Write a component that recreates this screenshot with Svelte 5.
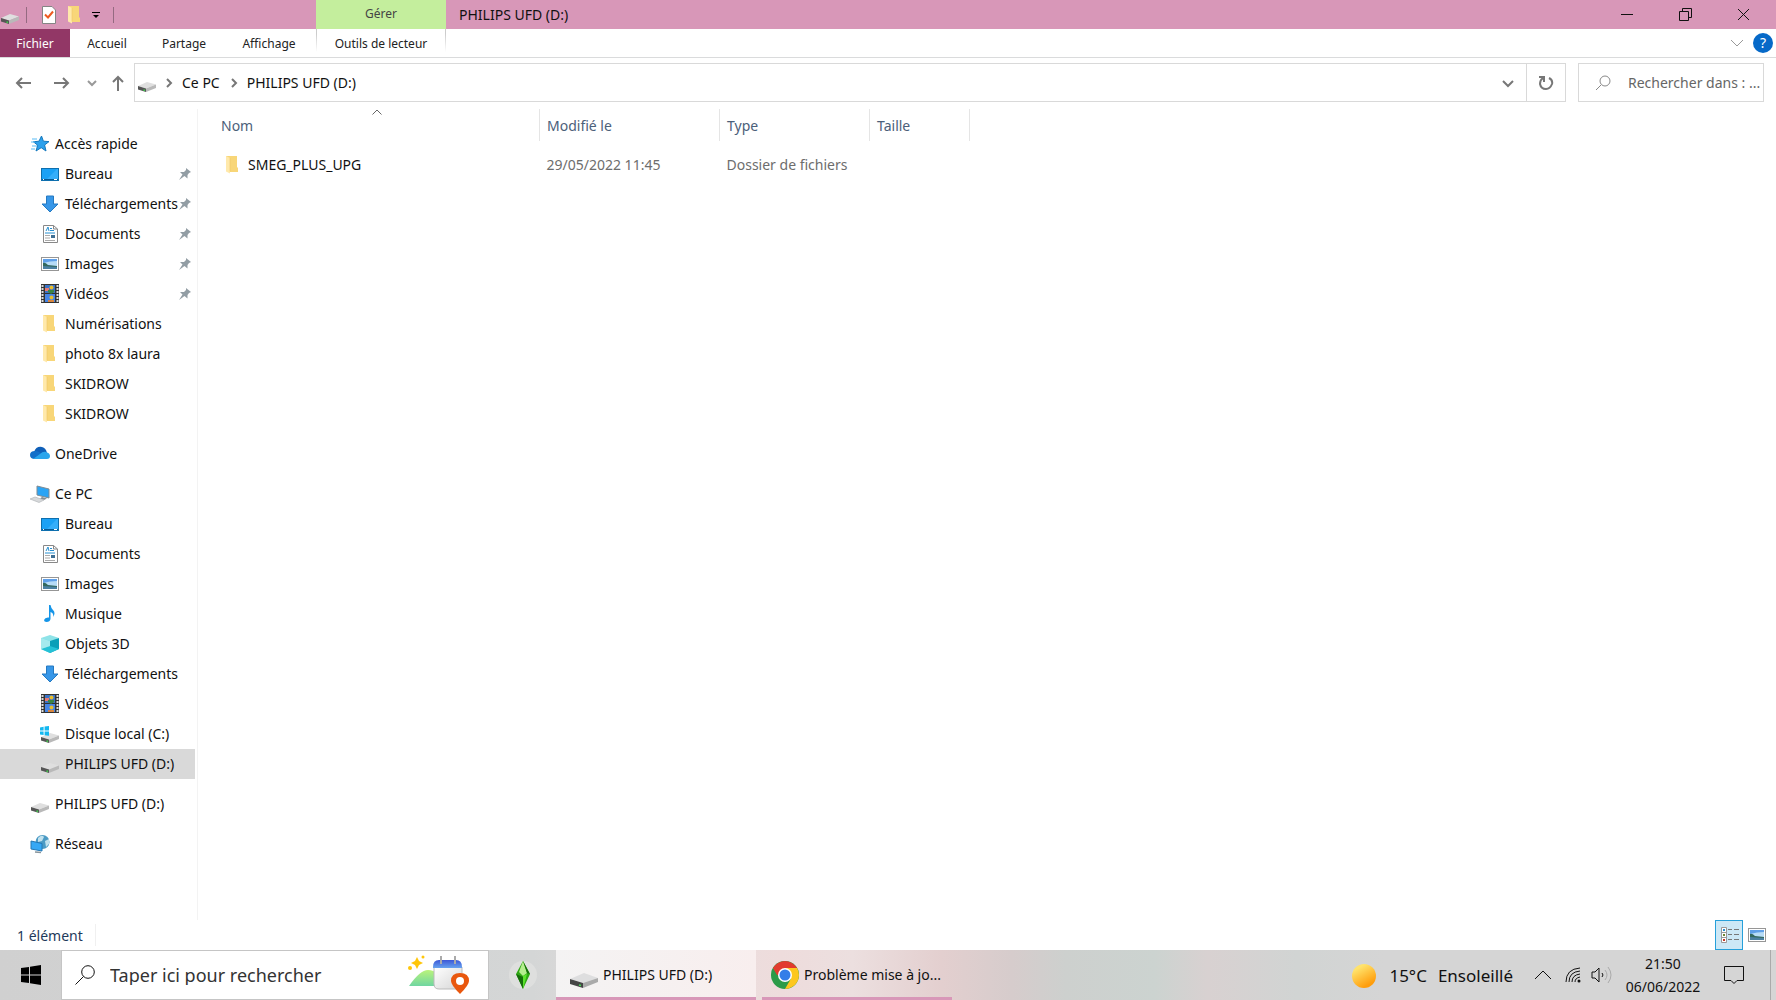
<script>
  const quickAccess = [
    { icon: 'desktop', label: 'Bureau', pinned: true },
    { icon: 'download', label: 'Téléchargements', pinned: true },
    { icon: 'document', label: 'Documents', pinned: true },
    { icon: 'picture', label: 'Images', pinned: true },
    { icon: 'video', label: 'Vidéos', pinned: true },
    { icon: 'folder', label: 'Numérisations' },
    { icon: 'folder', label: 'photo 8x laura' },
    { icon: 'folder', label: 'SKIDROW' },
    { icon: 'folder', label: 'SKIDROW' }
  ];

  const thisPc = [
    { icon: 'desktop', label: 'Bureau' },
    { icon: 'document', label: 'Documents' },
    { icon: 'picture', label: 'Images' },
    { icon: 'music', label: 'Musique' },
    { icon: 'cube', label: 'Objets 3D' },
    { icon: 'download', label: 'Téléchargements' },
    { icon: 'video', label: 'Vidéos' },
    { icon: 'system', label: 'Disque local (C:)' },
    { icon: 'drive', label: 'PHILIPS UFD (D:)', id: 'usb' }
  ];

  const groups = [
    { icon: 'star', label: 'Accès rapide', items: quickAccess },
    { icon: 'cloud', label: 'OneDrive', items: [] },
    { icon: 'pc', label: 'Ce PC', items: thisPc },
    { icon: 'drive', label: 'PHILIPS UFD (D:)', items: [] },
    { icon: 'network', label: 'Réseau', items: [] }
  ];

  const files = [
    { name: 'SMEG_PLUS_UPG', date: '29/05/2022 11:45', type: 'Dossier de fichiers', size: '' }
  ];

  let selected = $state('usb');
</script>

{#snippet icon(name)}
  <svg class="icon" viewBox="0 0 20 20" aria-hidden="true">
    {#if name === 'drive' || name === 'system'}
      <path d="M1 13 10 9 19 11.500 9 15.500Z" fill="#dfdfdf" />
      <path d="M1 13 9 15.500V19L1 16.500Z" fill="#555" />
      <path d="M9 15.500 19 11.500V15L9 19Z" fill="#b9b9b9" />
      <path d="M6.500 17 8 17.500" stroke="#3fcf4a" stroke-width="1.4" />
      {#if name === 'system'}
        <path d="M0 3.400 3.600 2.800V6.400H0ZM4.600 2.600 9 2V6.400H4.600ZM0 7.400H3.600V11L0 10.400ZM4.600 7.400H9V11.800L4.600 11.200Z" fill="#14b8f0" />
      {/if}
    {:else if name === 'folder'}
      <path d="M3 1H14V12L15 13V17H6Z" fill="#f8d678" />
      <path d="M3 1 7 3V18.500L3 16.500Z" fill="#ffe9ab" />
      <path d="M7 3V16.500" stroke="#eec765" stroke-width="0.6" />
    {:else if name === 'star'}
      <path d="M11.500 2 13.400 7.200 19 7.600 14.600 11 16 17 11.200 13.700 6 17 7.700 11.200 3.400 7.800 9 7.200Z" fill="#2ba0ec" stroke="#1478bd" />
      <path d="M2 5H7M1 8H5M2 12H7M1 15H5" stroke="#59bbf5" />
    {:else if name === 'desktop'}
      <rect x="1.500" y="4.500" width="17" height="12" fill="#1ba1f5" stroke="#0e6fae" />
      <path d="M7 15 17 5H18V15Z" fill="#35aefa" />
      <path d="M2 15.500H18" stroke="#075a94" />
      <path d="M3 15.500H4M14 15.500H17" stroke="#fff" />
    {:else if name === 'download'}
      <path d="M6.500 2H13.500V10H18L10 18 2 10H6.500Z" fill="#3797e8" stroke="#2479c1" />
    {:else if name === 'document'}
      <path d="M3.500 1.500H13.500L17.500 5V18.500H3.500Z" fill="#fff" stroke="#888" />
      <path d="M13.500 1.500V5H17.500" fill="none" stroke="#888" />
      <path d="M6 7 8 3 9 7M10 4.500H12M10 6.500H14M5 9H15" stroke="#278fd0" fill="none" />
      <path d="M5 11.500H10M5 14H10M5 16.500H15" stroke="#aaa" />
      <rect x="11" y="11" width="4" height="3" fill="#3f7095" />
    {:else if name === 'picture'}
      <rect x="1.500" y="3.500" width="17" height="13" fill="#fff" stroke="#969696" />
      <rect x="3" y="5" width="14" height="10" fill="#b7dcf7" />
      <path d="M3 5H17V7Q10 7 3 9Z" fill="#5f9fe8" />
      <path d="M3 9Q5 8 8 11L17 12V13H3Z" fill="#33685d" />
      <path d="M3 12 17 13V15H3Z" fill="#4b80a2" />
    {:else if name === 'video'}
      <rect x="1" y="0" width="18" height="19" fill="#333" />
      <path d="M2.500 1V18M17.500 1V18" stroke="#ddd" stroke-width="2" stroke-dasharray="2 1" />
      <rect x="5" y="1" width="10" height="8" fill="#3b74c8" />
      <rect x="5" y="10" width="10" height="8" fill="#4585e5" />
      <path d="M5 4H9V7H5Z" fill="#e97972" />
      <circle cx="11.500" cy="3.500" r="2" fill="#e7be30" />
      <path d="M8 6H14V8L11 10 8 8Z" fill="#3b8544" />
      <circle cx="11.500" cy="13.500" r="2" fill="#e7be30" />
      <path d="M8 16H14V18H8Z" fill="#d9863f" />
    {:else if name === 'cloud'}
      <path d="M4 8Q6 2 12 3Q16 4 17 9L12 12Z" fill="#0f5fb8" />
      <path d="M5 15Q0 15 0 11Q0 7 5 7Q7 7 9 8L15 12L12 15Z" fill="#126fc9" />
      <path d="M3 15 10 10Q13 7 16 8Q20 9 20 12Q20 15 17 15H5Z" fill="#2aa5ec" />
    {:else if name === 'pc'}
      <path d="M7 2 19 5V14L7 11Z" fill="#2ba4f5" stroke="#7f8b93" />
      <path d="M12 13 17 14.500 14 16 10 14.500Z" fill="#858d92" />
      <path d="M0 15 5 13 14 16 9 18.500Z" fill="#d7d9db" stroke="#a9aeb2" stroke-width="0.6" />
    {:else if name === 'music'}
      <path d="M9 1H10.500Q11 4 13 6Q16 9 13 13Q14 9 10.500 8V15Q10 18 6.500 18Q4 18 4 16Q5 13 9 13.500V1Z" fill="#1595e8" />
    {:else if name === 'cube'}
      <path d="M1 4 10 1 19 4 10 8Z" fill="#8fe3e8" />
      <path d="M1 4 10 7V19L1 15Z" fill="#62d3dc" />
      <path d="M10 7 19 4V15L10 19Z" fill="#0b9fb8" />
      <path d="M1 15 10 12 19 15 10 19Z" fill="#25c1d6" />
      <path d="M1 4 10 7V12L1 15Z" fill="#a5eaee" />
    {:else if name === 'network'}
      <circle cx="12.500" cy="8" r="7" fill="#4b9ac4" />
      <path d="M8 4Q12 0 14 3L12 7 8 8ZM15 7 19 5V10L16 13Z" fill="#c1e1ed" />
      <path d="M1 7 12 9.500V17L1 15Z" fill="#35a8f5" stroke="#2478b4" />
      <path d="M5 18 11 18.500" stroke="#87949c" stroke-width="1.500" />
    {/if}
  </svg>
{/snippet}

{#snippet chevron()}
  <svg class="chevron" viewBox="0 0 8 12" aria-hidden="true"><path d="M2 2 6 6 2 10" /></svg>
{/snippet}

<div class="desktop">
  <header class="titlebar">
    <div class="quick-tools">
      {@render icon('drive')}
      <i class="tool-line"></i>
      <button aria-label="Propriétés">
        <svg class="icon" viewBox="0 0 20 20">
          <path d="M4.500 1.500H14L17.500 5V18.500H4.500Z" fill="#fff" stroke="#858585" />
          <path d="M7 9.500 10 12.500 15 6.500" fill="none" stroke="#ee5a20" stroke-width="2" />
        </svg>
      </button>
      <button aria-label="Nouveau dossier">{@render icon('folder')}</button>
      <button aria-label="Personnaliser">
        <svg class="small-icon" viewBox="0 0 8 8"><path d="M0 1.500H8" stroke="#000" /><path d="M1 4H7L4 7Z" /></svg>
      </button>
      <i class="tool-line"></i>
    </div>
    <span class="context">Gérer</span>
    <h1>PHILIPS UFD (D:)</h1>
    <div class="window-controls">
      <button aria-label="Réduire"><svg viewBox="0 0 13 13"><path d="M0 6.500H12" /></svg></button>
      <button aria-label="Restaurer"><svg viewBox="0 0 13 13"><path d="M0.500 3.500H9.500V12.500H0.500ZM3.500 3V0.500H12.500V9.500H10" /></svg></button>
      <button aria-label="Fermer"><svg viewBox="0 0 13 13"><path d="M1 1 12 12M12 1 1 12" /></svg></button>
    </div>
  </header>

  <nav class="ribbon" aria-label="Ruban">
    <button class="file-tab">Fichier</button>
    <button class="home-tab">Accueil</button>
    <button class="share-tab">Partage</button>
    <button class="view-tab">Affichage</button>
    <button class="drive-tab">Outils de lecteur</button>
    <div class="ribbon-end">
      <button aria-label="Développer le ruban"><svg class="expand" viewBox="0 0 12 8"><path d="M0 1 6 7 12 1" /></svg></button>
      <button class="help" aria-label="Aide">?</button>
    </div>
  </nav>

  <div class="location">
    <div class="history">
      <button class="back" aria-label="Précédent"><svg viewBox="0 0 16 16"><path d="M16 8H2M7 3 2 8 7 13" /></svg></button>
      <button class="forward" aria-label="Suivant"><svg viewBox="0 0 16 16"><path d="M0 8H14M9 3 14 8 9 13" /></svg></button>
      <button class="recent" aria-label="Récents"><svg viewBox="0 0 16 16"><path d="M4 6 8 10 12 6" /></svg></button>
      <button aria-label="Dossier parent"><svg viewBox="0 0 16 16"><path d="M8 16V2M3 7 8 2 13 7" /></svg></button>
    </div>
    <div class="address">
      {@render icon('drive')}
      {@render chevron()}
      <a href="#pc">Ce PC</a>
      {@render chevron()}
      <a href="#usb">PHILIPS UFD (D:)</a>
      <button class="address-open" aria-label="Emplacements précédents"><svg viewBox="0 0 16 16"><path d="M3 6 8 11 13 6" /></svg></button>
      <button class="refresh" aria-label="Actualiser"><svg viewBox="0 0 16 16"><path d="M11 3Q15 5 14 9Q12 14 8 14Q3 14 2 9Q2 5 5 3M1 2H6V7" /></svg></button>
    </div>
    <label class="folder-search">
      <svg viewBox="0 0 16 16" aria-hidden="true"><circle cx="10" cy="6" r="5" /><path d="M6 10 1 15" /></svg>
      <input type="text" aria-label="Rechercher" placeholder="Rechercher dans : ..." />
    </label>
  </div>

  <div class="browser">
    <nav class="sidebar" aria-label="Dossiers">
      {#each groups as group}
        <section class="group">
          <button class="nav-row root">{@render icon(group.icon)}<span>{group.label}</span></button>
          {#each group.items as item}
            <button
              class="nav-row"
              class:selected={item.id && item.id === selected}
              onclick={() => (selected = item.id)}
            >
              {@render icon(item.icon)}
              <span class="nav-label">{item.label}</span>
              {#if item.pinned}
                <svg class="pin" viewBox="0 0 14 14" aria-hidden="true"><path d="M8 1 13 5 11 6 9.500 8V11.500L6.500 9 1 13 4.500 7.500 2 5H6L8 3Z" /></svg>
              {/if}
            </button>
          {/each}
        </section>
      {/each}
    </nav>

    <main>
      <table>
        <thead>
          <tr>
            <th class="name-col">
              Nom
              <svg class="sort" viewBox="0 0 10 6" aria-hidden="true"><path d="M0.500 5.500 5 1 9.500 5.500" /></svg>
            </th>
            <th class="date-col">Modifié le</th>
            <th class="type-col">Type</th>
            <th class="size-col">Taille</th>
          </tr>
        </thead>
        <tbody>
          {#each files as file}
            <tr>
              <td><div class="file-name">{@render icon('folder')}{file.name}</div></td>
              <td>{file.date}</td>
              <td>{file.type}</td>
              <td>{file.size}</td>
            </tr>
          {/each}
        </tbody>
      </table>
    </main>
  </div>

  <div class="status">
    <span>1 élément</span>
    <div class="view-modes">
      <button class="active" aria-label="Détails">
        <svg class="icon" viewBox="0 0 20 20">
          <path d="M2.500 2.500H7.500V17.500H2.500ZM2.500 7.500H7.500M2.500 12.500H7.500" fill="#fff" stroke="#999" />
          <path d="M9 4.500H13M15 4.500H20M9 9.500H13M15 9.500H20M9 14.500H13M15 14.500H20" stroke="#777" />
          <path d="M4 5H6" stroke="#278fd0" stroke-width="2" />
          <path d="M4 10H6" stroke="#6d8730" stroke-width="2" />
          <path d="M4 15H6" stroke="#c43824" stroke-width="2" />
        </svg>
      </button>
      <button aria-label="Grandes icônes">{@render icon('picture')}</button>
    </div>
  </div>

  <footer class="taskbar">
    <button class="start" aria-label="Démarrer">
      <svg viewBox="0 0 20 20"><path d="M0 3 8 2V9.500H0ZM9 1.800 20 0V9.500H9ZM0 10.500H8V18L0 17ZM9 10.500H20V20L9 18.200Z" /></svg>
    </button>
    <label class="task-search">
      <svg class="magnifier" viewBox="0 0 20 20" aria-hidden="true"><circle cx="13" cy="7" r="6.300" /><path d="M8.500 11.500 0.500 19.500" /></svg>
      <input type="text" aria-label="Rechercher dans Windows" placeholder="Taper ici pour rechercher" />
      <svg class="highlight" viewBox="0 0 62 40" aria-hidden="true">
        <defs>
          <linearGradient id="hill" x2="0" y2="1"><stop stop-color="#baf37b" /><stop offset="1" stop-color="#70d6a1" /></linearGradient>
          <linearGradient id="calendar" x2="0" y2="1"><stop stop-color="#3c57d7" /><stop offset="1" stop-color="#68a3ee" /></linearGradient>
          <linearGradient id="paper" x2="1" y2="1"><stop stop-color="#fff" /><stop offset="1" stop-color="#d5d5d5" /></linearGradient>
        </defs>
        <path d="M1 31Q12 15 20 15Q31 15 38 31Z" fill="url(#hill)" />
        <path d="M26 12H54V29Q54 34 49 34H31Q26 34 26 29Z" fill="url(#paper)" stroke="#bbb" />
        <path d="M25 12Q25 5 31 5H48Q54 5 54 12V13H25Z" fill="url(#calendar)" />
        <path d="M33 1V9M47 1V9" stroke="#aaa" stroke-width="2" />
        <path d="M9 2 11 6 15 8 11 10 9 14 7 10 3 8 7 6Z" fill="#ffc60a" />
        <circle cx="2" cy="13" r="2" fill="#ffc60a" /><circle cx="15" cy="2" r="1.500" fill="#ffc60a" />
        <path d="M52 39Q43 30 43 26Q43 18 52 18Q61 18 61 26Q61 30 52 39Z" fill="#e9570e" />
        <circle cx="52" cy="26" r="4" fill="#fff" />
      </svg>
    </label>
    <button class="sims" aria-label="Les Sims">
      <svg viewBox="0 0 28 28">
        <circle cx="14" cy="14" r="14" fill="#dedfde" />
        <path d="M14 0 7 13 14 28 21 13Z" fill="#30a915" />
        <path d="M14 0 10 11 14 15 18 12Z" fill="#b5ee8f" />
        <path d="M14 0 18 12 21 13ZM7 13 14 16V28Z" fill="#166d0b" />
        <path d="M14 15 18 13 14 28Z" fill="#5be52b" />
      </svg>
    </button>
    <button class="task active-task">
      <svg class="task-icon" viewBox="0 0 28 28" aria-hidden="true">
        <path d="M0 18 14 12 28 17 13 22Z" fill="#dededf" />
        <path d="M0 18 13 22V27L0 23Z" fill="#454545" />
        <path d="M13 22 28 17V21L13 27Z" fill="#aaa" />
        <path d="M9 24 11 24.500" stroke="#48db55" stroke-width="1.500" />
      </svg>
      PHILIPS UFD (D:)
    </button>
    <button class="task chrome-task">
      <svg class="task-icon" viewBox="0 0 28 28" aria-hidden="true">
        <circle cx="14" cy="14" r="14" fill="#2b9b48" />
        <path d="M1.900 7A14 14 0 0 1 26.100 7H14V14H6Z" fill="#e23b2e" />
        <path d="M14 7H26.100A14 14 0 0 1 14 28L20 17.500Z" fill="#fdc71e" />
        <circle cx="14" cy="14" r="7" fill="#fff" /><circle cx="14" cy="14" r="5.500" fill="#347ee8" />
      </svg>
      Problème mise à jo...
    </button>
    <div class="tray">
      <button class="weather"><i class="sun"></i><span>15°C</span><span>Ensoleillé</span></button>
      <button class="tray-open" aria-label="Icônes cachées"><svg viewBox="0 0 16 16"><path d="M0 12 8 4 16 12" /></svg></button>
      <button class="wifi" aria-label="Réseau">
        <svg viewBox="0 0 16 16"><path d="M1 15Q1 2 15 1M4 15Q4 5 15 4M7 15Q7 8 15 7M10 15Q10 11 15 10" /><circle cx="14" cy="14" r="1.500" fill="#111" stroke="none" /></svg>
      </button>
      <button class="sound" aria-label="Volume">
        <svg viewBox="0 0 22 18"><path d="M1 6H4L8 2V16L4 12H1ZM11 7Q13 9 11 11" /><path class="muted" d="M14 4Q18 9 14 14M17 1Q23 9 17 17" /></svg>
      </button>
      <button class="clock"><time>21:50</time><span>06/06/2022</span></button>
      <button class="messages" aria-label="Notifications"><svg viewBox="0 0 22 20"><path d="M1.500 1.500H20.500V15.500H14L11 18.500 8 15.500H1.500Z" /></svg></button>
      <button class="show-desktop" aria-label="Afficher le bureau"></button>
    </div>
  </footer>
</div>

<style>
  :global(body) {
    margin: 0;
  }

  .desktop {
    display: flex;
    flex-direction: column;
    min-height: 100vh;
    background: #fff;
    color: #111;
    font: 14px/20px "Noto Sans", "Open Sans", sans-serif;
  }

  button,
  input {
    font: inherit;
    color: inherit;
    padding: 0;
    border: 0;
    background: none;
  }

  button {
    display: flex;
    align-items: center;
    flex-shrink: 0;
  }

  svg {
    display: block;
    flex-shrink: 0;
  }

  .icon {
    width: 20px;
    height: 20px;
  }

  .titlebar {
    display: flex;
    height: 29px;
    background: #d897b8;
  }

  .quick-tools {
    display: flex;
    align-items: center;
    gap: 7px;
    width: 316px;
  }

  .tool-line {
    width: 1px;
    height: 16px;
    margin: 0 4px 0 -1px;
    background: #956a81;
  }

  .small-icon {
    width: 8px;
    height: 8px;
    margin-right: 7px;
  }

  .context {
    width: 130px;
    background: #c4ee9d;
    color: #444;
    font-size: 12px;
    line-height: 28px;
    text-align: center;
  }

  h1 {
    flex: 1;
    margin: 0 0 0 13px;
    font-size: 14px;
    font-weight: 400;
    line-height: 29px;
  }

  .window-controls {
    display: flex;
    padding-right: 4px;
  }

  .window-controls button {
    width: 58px;
    justify-content: center;
  }

  .window-controls svg {
    width: 13px;
    height: 13px;
    fill: none;
    stroke: #111;
  }

  .ribbon {
    display: flex;
    height: 28px;
    border-bottom: 1px solid #dadbdc;
    font-size: 12px;
    color: #222;
  }

  .ribbon > button {
    justify-content: center;
    padding-top: 2px;
  }

  .ribbon .file-tab {
    width: 70px;
    background: #923766;
    color: #fff;
  }

  .home-tab {
    width: 74px;
  }

  .share-tab {
    width: 80px;
  }

  .view-tab {
    width: 90px;
  }

  .ribbon .drive-tab {
    width: 130px;
    margin-left: 2px;
    border: solid;
    border-width: 0 1px;
    border-image: linear-gradient(#ccc 20%, #fff 80%) 1;
  }

  .ribbon-end {
    display: flex;
    align-items: center;
    gap: 10px;
    margin-left: auto;
    padding-right: 3px;
  }

  .expand {
    width: 12px;
    height: 8px;
    fill: none;
    stroke: #999;
  }

  .help {
    justify-content: center;
    width: 20px;
    height: 20px;
    border-radius: 50%;
    background: #0669c8;
    color: #fff;
    font-size: 14px;
  }

  .location {
    display: flex;
    padding: 5px 12px 7px 15px;
  }

  .history {
    display: flex;
    width: 119px;
  }

  .back {
    width: 39px;
  }

  .forward {
    width: 30px;
  }

  .recent {
    width: 26px;
  }

  .location svg:not(.icon, .chevron) {
    width: 16px;
    height: 16px;
    fill: none;
    stroke: #777;
    stroke-width: 2;
  }

  .location .recent svg {
    stroke: #999;
  }

  .address {
    display: flex;
    flex: 1;
    align-items: center;
    height: 37px;
    padding-left: 2px;
    border: 1px solid #d9d9d9;
  }

  .address a {
    padding-right: 2px;
    color: inherit;
    text-decoration: none;
  }

  .chevron {
    width: 8px;
    height: 12px;
    margin: 0 9px 0 8px;
    fill: none;
    stroke: #777;
    stroke-width: 2;
  }

  .address-open {
    margin: 0 10px 0 auto;
  }

  .refresh {
    justify-content: center;
    width: 39px;
    height: 37px;
    border-left: 1px solid #d9d9d9;
  }

  .folder-search {
    display: flex;
    align-items: center;
    gap: 17px;
    width: 168px;
    margin-left: 12px;
    padding-left: 16px;
    border: 1px solid #d9d9d9;
  }

  .location .folder-search svg {
    stroke: #888;
    stroke-width: 1;
  }

  input {
    flex: 1;
    min-width: 0;
    outline: 0;
  }

  input::placeholder {
    color: #666;
    opacity: 1;
  }

  .browser {
    display: flex;
    flex: 1;
  }

  .sidebar {
    width: 197px;
    padding-top: 20px;
    border-right: 1px solid #f3f3f3;
  }

  .group {
    margin-bottom: 10px;
  }

  .nav-row {
    gap: 5px;
    width: 195px;
    height: 30px;
    padding-left: 40px;
    white-space: nowrap;
  }

  .nav-row.root {
    padding-left: 30px;
  }

  .nav-row.selected {
    background: #d9d9d9;
  }

  .nav-label {
    width: 114px;
    text-align: left;
  }

  .pin {
    width: 14px;
    height: 14px;
    margin-left: -6px;
    fill: #929da4;
  }

  main {
    flex: 1;
  }

  table {
    width: 772px;
    table-layout: fixed;
    border-collapse: collapse;
    text-align: left;
  }

  th {
    position: relative;
    height: 30px;
    padding: 2px 0 0 7px;
    border-right: 1px solid #e5e5e5;
    color: #4c607a;
    font-weight: 400;
  }

  .name-col {
    width: 318px;
    padding-left: 23px;
  }

  .date-col {
    width: 172px;
  }

  .type-col {
    width: 142px;
  }

  .size-col {
    width: 92px;
  }

  .sort {
    position: absolute;
    top: 0;
    left: 174px;
    width: 10px;
    height: 6px;
    fill: none;
    stroke: #666;
  }

  td {
    height: 44px;
    padding: 2px 0 0 7px;
    color: #6d6d6d;
  }

  .file-name {
    display: flex;
    align-items: center;
    gap: 5px;
    padding-left: 18px;
    color: #111;
  }

  .status {
    display: flex;
    align-items: center;
    height: 30px;
    color: #1e395b;
  }

  .status > span {
    padding: 2px 12px 0 17px;
    border-right: 1px solid #f0f0f0;
  }

  .view-modes {
    display: flex;
    height: 30px;
    margin-left: auto;
    padding-right: 5px;
  }

  .view-modes button {
    justify-content: center;
    width: 28px;
  }

  .view-modes .active {
    border: 1px solid #26a0da;
    background: #cce8f6;
  }

  .taskbar {
    display: flex;
    height: 50px;
    background: linear-gradient(90deg, #d0d0d0 0, #d4d6d6 30%, #e8dfdf 38%, #eedcdc 44%, #ecdfdf 48%, #e3cfcf 53%, #d6cccc 57%, #cdd0ce 60%, #ccd3d0 65%, #d8d1d1 68%, #d1d4d3 73%, #d5d5d5 78%);
  }

  .start {
    justify-content: center;
    width: 61px;
  }

  .start svg {
    width: 20px;
    height: 20px;
  }

  .task-search {
    display: flex;
    align-items: center;
    width: 395px;
    padding: 0 18px 0 13px;
    border: 1px solid #c5c5c5;
    background: #fff;
    font-size: 18px;
  }

  .magnifier {
    width: 20px;
    height: 20px;
    margin-right: 15px;
    fill: none;
    stroke: #111;
    stroke-width: 1;
  }

  .task-search input::placeholder {
    color: #333;
  }

  .highlight {
    width: 62px;
    height: 40px;
  }

  .sims {
    justify-content: center;
    width: 67px;
  }

  .sims svg,
  .task-icon {
    width: 28px;
    height: 28px;
  }

  .task {
    gap: 5px;
    padding-top: 3px;
    border-bottom: 3px solid #d897b8;
    white-space: nowrap;
  }

  .active-task {
    width: 200px;
    padding-left: 14px;
    background: linear-gradient(90deg, #f4f3f3, #f8eeee);
  }

  .chrome-task {
    width: 190px;
    margin-left: 6px;
    padding-left: 9px;
  }

  .tray {
    display: flex;
    margin-left: auto;
  }

  .tray svg {
    fill: none;
    stroke: #111;
  }

  .weather {
    gap: 11px;
    margin-right: 22px;
    padding-top: 2px;
    font-size: 17px;
  }

  .sun {
    width: 24px;
    height: 24px;
    margin-right: 2px;
    border-radius: 50%;
    background: linear-gradient(150deg, #ffe36c 20%, #ff9d0b 80%);
  }

  .tray-open {
    width: 30px;
  }

  .wifi {
    width: 26px;
  }

  .tray-open svg,
  .wifi svg {
    width: 16px;
    height: 16px;
  }

  .sound {
    width: 33px;
  }

  .sound svg {
    width: 22px;
    height: 18px;
  }

  .tray .muted {
    stroke: #aaa;
  }

  .clock {
    flex-direction: column;
    justify-content: center;
    width: 78px;
    line-height: 23px;
  }

  .messages {
    justify-content: center;
    width: 64px;
    margin-right: 4px;
  }

  .messages svg {
    width: 22px;
    height: 20px;
    stroke-width: 1;
  }

  .show-desktop {
    width: 6px;
    border-left: 1px solid #aaa;
  }
</style>
